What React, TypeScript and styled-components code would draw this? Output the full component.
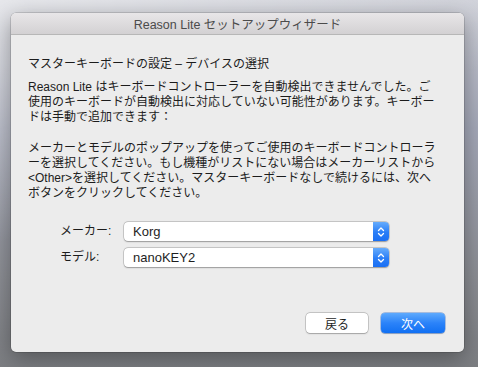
import * as React from "react";
import styled, { createGlobalStyle } from "styled-components";

const GlobalStyle = createGlobalStyle`
  html, body {
    margin: 0;
    padding: 0;
  }
  body {
    font-family: "Liberation Sans", "Noto Sans CJK JP", sans-serif;
    -webkit-font-smoothing: antialiased;
  }
`;

const Desktop = styled.div`
  width: 478px;
  height: 367px;
  overflow: hidden;
  padding: 13px 0 0 11px;
  box-sizing: border-box;
  background:
    linear-gradient(160deg, rgba(255, 255, 255, 0.55) 0%, rgba(255, 255, 255, 0) 45%),
    linear-gradient(180deg, #c9cbd4 0%, #a4a8b8 35%, #8c8e94 75%, #7c7e82 100%);
`;

const Window = styled.div`
  width: 453px;
  height: 339px;
  display: flex;
  flex-direction: column;
  border-radius: 5px;
  overflow: hidden;
  background: #ececec;
  box-shadow: 0 0 0 0.5px rgba(0, 0, 0, 0.25), 0 6px 22px rgba(0, 0, 0, 0.35);
`;

const TitleBar = styled.div`
  height: 21px;
  flex-shrink: 0;
  display: flex;
  align-items: center;
  justify-content: center;
  background: linear-gradient(180deg, #e8e6e8 0%, #d3d1d3 100%);
  border-bottom: 1px solid #b7b7b7;
  color: #4b4b4b;
  font-size: 12.5px;
`;

const Content = styled.div`
  flex: 1;
  display: flex;
  flex-direction: column;
  padding: 22px 19px 19px 17px;
  color: #1c1c1c;
  font-size: 12px;
  line-height: 15px;
`;

const Heading = styled.div`
  margin: 0;
`;

const Paragraph = styled.p<{ $gap: number }>`
  margin: ${(p) => p.$gap}px 0 0 0;
  white-space: nowrap;
`;

const Form = styled.div`
  display: grid;
  grid-template-columns: 64px 265px;
  row-gap: 7px;
  align-items: center;
  margin: 21px 0 0 32px;
`;

const Label = styled.div`
  font-size: 12px;
`;

const Select = styled.div`
  height: 19px;
  display: flex;
  align-items: stretch;
  background: #ffffff;
  border-radius: 4px;
  box-shadow: 0 0 0 0.5px rgba(0, 0, 0, 0.25), 0 0.5px 1.5px rgba(0, 0, 0, 0.25);
`;

const SelectValue = styled.div`
  flex: 1;
  display: flex;
  align-items: center;
  padding-left: 9px;
  font-size: 13px;
  color: #1e1e1e;
`;

const Stepper = styled.div`
  width: 16px;
  display: flex;
  align-items: center;
  justify-content: center;
  border-radius: 0 4px 4px 0;
  background: linear-gradient(180deg, #66acfc 0%, #2a7ef7 55%, #1a6ff3 100%);
`;

const Footer = styled.div`
  margin-top: auto;
  display: flex;
  justify-content: flex-end;
  gap: 13px;
`;

const Button = styled.button<{ $primary?: boolean; $width: number }>`
  width: ${(p) => p.$width}px;
  height: 20px;
  padding: 0;
  border: none;
  border-radius: 4px;
  font-family: inherit;
  font-size: 12px;
  color: ${(p) => (p.$primary ? "#ffffff" : "#1e1e1e")};
  background: ${(p) =>
    p.$primary
      ? "linear-gradient(180deg, #5eaafd 0%, #2b83f9 50%, #1170f3 100%)"
      : "#ffffff"};
  box-shadow: ${(p) =>
    p.$primary
      ? "0 0 0 0.5px rgba(20, 90, 200, 0.6), 0 0.5px 1px rgba(0, 0, 0, 0.2)"
      : "0 0 0 0.5px rgba(0, 0, 0, 0.28), 0 0.5px 1.5px rgba(0, 0, 0, 0.2)"};
`;

const Chevrons = () => (
  <svg width="8" height="12" viewBox="0 0 8 12">
    <path
      d="M1.5 4.5 L4 2 L6.5 4.5 M1.5 7.5 L4 10 L6.5 7.5"
      fill="none"
      stroke="#ffffff"
      strokeWidth="1.3"
      strokeLinecap="round"
      strokeLinejoin="round"
    />
  </svg>
);

const Popup: React.FC<{ value: string }> = ({ value }) => (
  <Select>
    <SelectValue>{value}</SelectValue>
    <Stepper>
      <Chevrons />
    </Stepper>
  </Select>
);

const App: React.FC = () => {
  return (
    <>
      <GlobalStyle />
      <Desktop>
        <Window>
          <TitleBar>Reason Lite セットアップウィザード</TitleBar>
          <Content>
            <Heading>マスターキーボードの設定 – デバイスの選択</Heading>
            <Paragraph $gap={8}>
              Reason Lite はキーボードコントローラーを自動検出できませんでした。ご
              <br />
              使用のキーボードが自動検出に対応していない可能性があります。キーボー
              <br />
              ドは手動で追加できます：
            </Paragraph>
            <Paragraph $gap={16}>
              メーカーとモデルのポップアップを使ってご使用のキーボードコントローラ
              <br />
              ーを選択してください。もし機種がリストにない場合はメーカーリストから
              <br />
              &lt;Other&gt;を選択してください。マスターキーボードなしで続けるには、次へ
              <br />
              ボタンをクリックしてください。
            </Paragraph>
            <Form>
              <Label>メーカー:</Label>
              <Popup value="Korg" />
              <Label>モデル:</Label>
              <Popup value="nanoKEY2" />
            </Form>
            <Footer>
              <Button $width={62}>戻る</Button>
              <Button $primary $width={64}>
                次へ
              </Button>
            </Footer>
          </Content>
        </Window>
      </Desktop>
    </>
  );
};

export default App;
